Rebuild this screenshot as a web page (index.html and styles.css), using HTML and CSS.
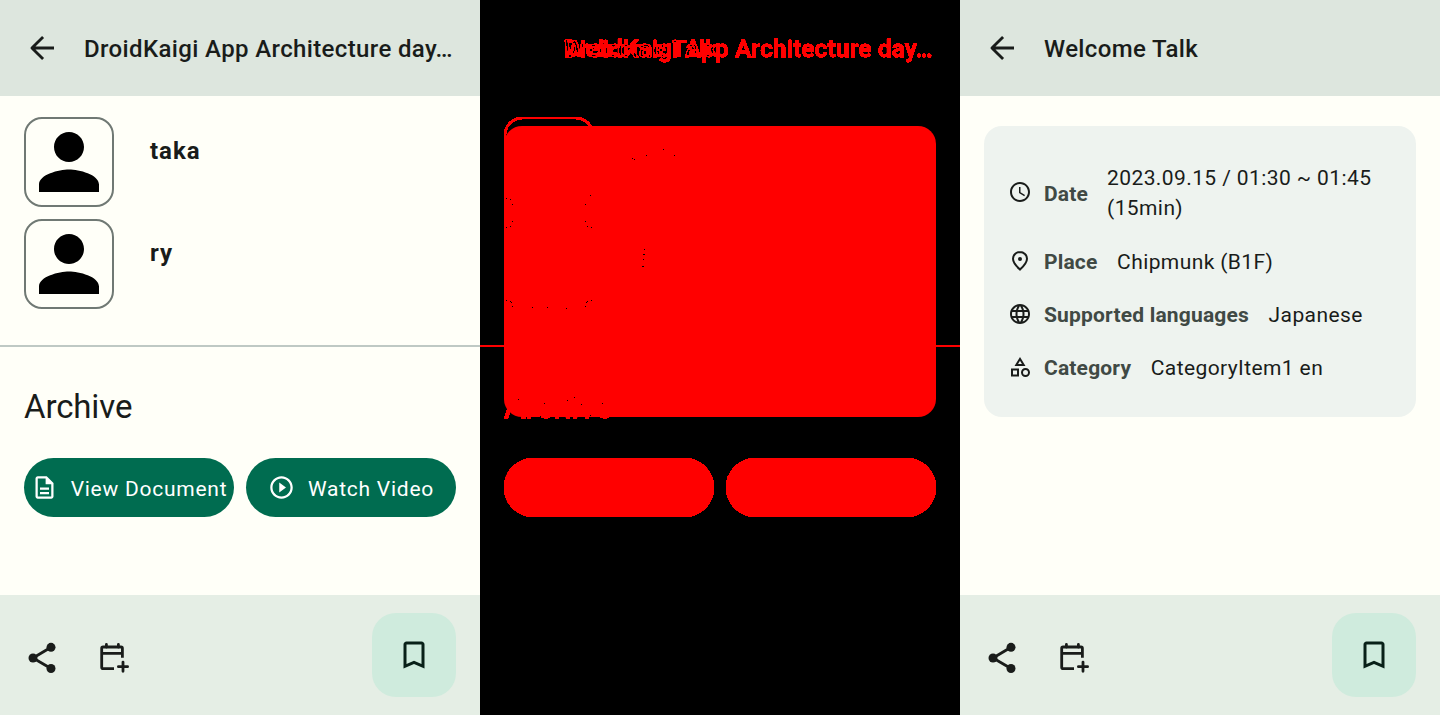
FILE: index.html
```html
<!DOCTYPE html>
<html lang="en">
<head>
<meta charset="utf-8">
<title>DroidKaigi session</title>
<link rel="stylesheet" href="styles.css">
</head>
<body>
<svg class="defs" aria-hidden="true">
  <defs>
    <filter id="threshold" x="0" y="0" width="1" height="1" color-interpolation-filters="sRGB">
      <feComponentTransfer><feFuncR type="linear" slope="60" intercept="-0.6"/></feComponentTransfer>
    </filter>
    <filter id="solid" x="-0.1" y="-0.1" width="1.2" height="1.2" color-interpolation-filters="sRGB">
      <feComponentTransfer><feFuncA type="linear" slope="60" intercept="-0.6"/></feComponentTransfer>
    </filter>
    <symbol id="back" viewBox="0 0 24 24"><path d="M20 12H5.2M12.7 4.7 5.3 12l7.4 7.3" fill="none" stroke="currentColor" stroke-width="1.9" stroke-linejoin="round"/></symbol>
    <symbol id="person" viewBox="0 0 24 24"><path d="M12 12c2.21 0 4-1.79 4-4s-1.79-4-4-4-4 1.79-4 4 1.79 4 4 4zm0 2c-2.67 0-8 1.34-8 4v2h16v-2c0-2.66-5.33-4-8-4z"/></symbol>
    <symbol id="share" viewBox="0 0 24 24"><path d="M18 4.9 6 12l12 7" fill="none" stroke="currentColor" stroke-width="1.9"/><circle cx="18" cy="4.9" r="3"/><circle cx="6" cy="12" r="3"/><circle cx="18" cy="19" r="3"/></symbol>
    <symbol id="calendar" viewBox="0 0 36 36"><g fill="none" stroke="currentColor" stroke-width="2.8" stroke-linejoin="round"><path d="M18 28.600H7.100q-1.400 0-1.400-1.400V8.400q0-1.400 1.400-1.400h17.900q1.400 0 1.400 1.400v9.300M5.700 13.300h20.700"/><path d="M10.400 7V4.400M22.400 7V4.400M27 22.100v9.200M22.400 26.700h9.200" stroke-linecap="round"/></g></symbol>
    <symbol id="bookmark" viewBox="0 0 24 24"><path d="M17 3H7c-1.100 0-1.990.9-1.990 2L5 21l7-3 7 3V5c0-1.100-.9-2-2-2zm0 15-5-2.180L7 18V5h10v13z"/></symbol>
    <symbol id="doc" viewBox="0 0 24 24"><path d="M8 16h8v2H8zm0-4h8v2H8zm6-10H6c-1.100 0-2 .9-2 2v16c0 1.100.89 2 1.990 2H18c1.100 0 2-.9 2-2V8l-6-6zm4 18H6V4h7v5h5v11z"/></symbol>
    <symbol id="play" viewBox="0 0 24 24"><path d="m10 16.500 6-4.500-6-4.500v9zM12 2C6.480 2 2 6.480 2 12s4.480 10 10 10 10-4.480 10-10S17.520 2 12 2zm0 18c-4.410 0-8-3.590-8-8s3.590-8 8-8 8 3.590 8 8-3.590 8-8 8z"/></symbol>
    <symbol id="clock" viewBox="0 0 24 24"><path d="M11.990 2C6.470 2 2 6.480 2 12s4.470 10 9.990 10C17.520 22 22 17.520 22 12S17.520 2 11.990 2zM12 20c-4.420 0-8-3.580-8-8s3.580-8 8-8 8 3.580 8 8-3.580 8-8 8zm.5-13H11v6l5.250 3.150.75-1.230-4.500-2.670z"/></symbol>
    <symbol id="pin" viewBox="0 0 24 24"><path d="M12 3C8.200 3 5 5.900 5 9.700c0 3 2.400 6.600 7 10.900 4.600-4.300 7-7.900 7-10.900C19 5.900 15.800 3 12 3z" fill="none" stroke="currentColor" stroke-width="2"/><circle cx="12" cy="10" r="2"/></symbol>
    <symbol id="globe" viewBox="0 0 24 24"><path d="M11.990 2C6.470 2 2 6.480 2 12s4.470 10 9.990 10C17.520 22 22 17.520 22 12S17.520 2 11.990 2zm6.930 6h-2.950c-.32-1.250-.78-2.450-1.380-3.560 1.840.630 3.370 1.910 4.330 3.560zM12 4.040c.83 1.200 1.480 2.530 1.910 3.960h-3.820c.43-1.430 1.080-2.760 1.910-3.960zM4.260 14C4.100 13.360 4 12.690 4 12s.1-1.360.26-2h3.380c-.08.66-.14 1.320-.14 2s.06 1.340.14 2H4.260zm.82 2h2.950c.32 1.250.78 2.450 1.380 3.560-1.840-.63-3.370-1.900-4.330-3.560zm2.950-8H5.080c.96-1.660 2.490-2.930 4.330-3.560C8.810 5.550 8.350 6.750 8.030 8zM12 19.960c-.83-1.200-1.480-2.530-1.910-3.960h3.820c-.43 1.430-1.080 2.760-1.910 3.960zM14.340 14H9.660c-.09-.66-.16-1.320-.16-2s.07-1.350.16-2h4.680c.09.65.16 1.320.16 2s-.07 1.340-.16 2zm.25 5.560c.6-1.110 1.060-2.310 1.380-3.560h2.950c-.96 1.650-2.490 2.930-4.330 3.560zM16.360 14c.08-.66.14-1.320.14-2s-.06-1.340-.14-2h3.380c.16.64.26 1.310.26 2s-.1 1.360-.26 2h-3.380z"/></symbol>
    <symbol id="category" viewBox="0 0 24 24"><path d="m12 2-5.500 9h11L12 2zm0 3.840L13.930 9h-3.870L12 5.840zM17.500 13c-2.490 0-4.500 2.010-4.500 4.500s2.010 4.500 4.500 4.500 4.500-2.010 4.500-4.500-2.010-4.500-4.500-4.500zm0 7a2.500 2.500 0 0 1 0-5 2.500 2.500 0 0 1 0 5zM3 21.500h8v-8H3v8zm2-6h4v4H5v-4z"/></symbol>
  </defs>
</svg>
<main class="board">
  <section class="screen">
    <header class="topbar"><svg class="icon-lg"><use href="#back"/></svg><h1 class="title">DroidKaigi App Architecture day…</h1></header>
    <div class="content">
      <div class="speakers">
        <div class="speaker"><div class="avatar"><svg class="portrait"><use href="#person"/></svg></div><span class="name">taka</span></div>
        <div class="speaker"><div class="avatar"><svg class="portrait"><use href="#person"/></svg></div><span class="name">ry</span></div>
      </div>
      <div class="archive">
        <h2 class="heading">Archive</h2>
        <div class="actions">
          <button class="button"><svg class="icon-md"><use href="#doc"/></svg><span class="button-label">View Document</span></button>
          <button class="button"><svg class="icon-md"><use href="#play"/></svg><span class="button-label">Watch Video</span></button>
        </div>
      </div>
    </div>
    <footer class="bottombar"><svg class="icon-lg"><use href="#share"/></svg><svg class="icon-lg"><use href="#calendar"/></svg><button class="fab"><svg class="icon-lg"><use href="#bookmark"/></svg></button></footer>
  </section>

  <section class="screen diff">
    <header class="diff-titles">
      <span class="title diff-title">DroidKaigi App Architecture day…</span>
      <span class="title diff-title diff-over">Welcome Talk</span>
    </header>
    <div class="diff-body">
      <div class="diff-avatar"></div>
      <div class="diff-divider"></div>
      <div class="diff-heading heading">Archive</div>
      <div class="diff-card"></div>
      <svg class="specks" viewBox="480 96 480 499"><path d="M663 149h1v1h-1zM632 158h1v1h-1zM634 159h1v1h-1zM646 155h1v1h-1zM674 155h1v1h-1zM590 195h1v1h-1zM506 198h1v1h-1zM510 199h1v1h-1zM512 204h1v1h-1zM585 204h1v1h-1zM512 221h1v1h-1zM510 226h1v1h-1zM506 227h1v1h-1zM585 221h1v1h-1zM587 226h1v1h-1zM591 227h1v1h-1zM644 249h1v1h-1zM643 254h2v1h-2zM643 259h1v1h-1zM642 266h2v1h-2zM506 300h1v1h-1zM510 301h1v1h-1zM511 302h1v1h-1zM512 306h1v1h-1zM532 307h1v1h-1zM547 307h1v1h-1zM566 308h1v1h-1zM591 300h1v1h-1zM587 301h1v1h-1zM586 302h1v1h-1zM585 306h1v1h-1zM518 399h1v1h-1zM574 397h1v1h-1zM567 400h1v1h-1zM544 403h1v1h-1zM581 404h1v1h-1zM602 403h1v1h-1zM540 416h1v1h-1zM590 415h1v1h-1z"/></svg>
      <div class="diff-actions"><div class="diff-button"></div><div class="diff-button"></div></div>
    </div>
  </section>

  <section class="screen">
    <header class="topbar"><svg class="icon-lg"><use href="#back"/></svg><h1 class="title">Welcome Talk</h1></header>
    <div class="content">
      <div class="card">
        <div class="row"><svg class="icon-sm"><use href="#clock"/></svg><span class="label">Date</span><span class="value">2023.09.15 / 01:30 ~ 01:45<br>(15min)</span></div>
        <div class="row"><svg class="icon-sm"><use href="#pin"/></svg><span class="label">Place</span><span class="value">Chipmunk (B1F)</span></div>
        <div class="row"><svg class="icon-sm"><use href="#globe"/></svg><span class="label">Supported languages</span><span class="value">Japanese</span></div>
        <div class="row"><svg class="icon-sm"><use href="#category"/></svg><span class="label">Category</span><span class="value">CategoryItem1 en</span></div>
      </div>
    </div>
    <footer class="bottombar"><svg class="icon-lg"><use href="#share"/></svg><svg class="icon-lg"><use href="#calendar"/></svg><button class="fab"><svg class="icon-lg"><use href="#bookmark"/></svg></button></footer>
  </section>
</main>
</body>
</html>
```
FILE: styles.css
```css
* { box-sizing: border-box; }
body { margin: 0; font-family: Roboto, sans-serif; color: #191c1a; overflow: hidden; }
svg { fill: currentColor; display: block; flex: none; }
button { border: 0; font: inherit; padding: 0; margin: 0; }
.defs { position: absolute; width: 0; height: 0; }
.board { display: grid; grid-template-columns: repeat(3, 480px); height: 715px; }
.screen { display: flex; flex-direction: column; height: 715px; background: #fffff8; }
.icon-lg { width: 36px; height: 36px; }
.icon-md { width: 27px; height: 27px; }
.icon-sm { width: 24px; height: 24px; margin-right: 12px; margin-top: -2px; }

.topbar { display: flex; align-items: center; gap: 24px; height: 96px; padding: 0 24px; background: #dde6de; }
.title { margin: 0; padding-top: 2px; font-size: 24px; font-weight: 500; line-height: 36px; letter-spacing: .37px; white-space: nowrap; }
.content { flex: 1; }

.speakers { display: flex; flex-direction: column; gap: 12px; height: 251px; padding: 21px 24px 0; border-bottom: 2px solid #bfc9c4; }
.speaker { display: flex; gap: 36px; }
.avatar { width: 90px; height: 90px; border: 2px solid #707974; border-radius: 18px; color: #000; }
.portrait { width: 90px; height: 90px; margin: -2px; }
.name { padding-top: 16px; font-size: 24px; font-weight: 700; line-height: 36px; letter-spacing: 1px; }
.archive { padding: 39px 24px 0; }
.heading { margin: 0; font-size: 33px; font-weight: 400; line-height: 42px; letter-spacing: -.12px; }
.actions { display: flex; gap: 12px; margin-top: 30px; }
.button { display: flex; align-items: center; justify-content: center; gap: 13px; width: 210px; height: 59px; border-radius: 30px; background: #006c50; color: #fff; }
.button-label { padding-top: 2px; font-size: 21px; line-height: 30px; letter-spacing: .75px; white-space: nowrap; }

.bottombar { display: flex; align-items: center; gap: 36px; height: 120px; padding: 0 24px; background: #e5eee5; }
.bottombar > .icon-lg { margin-top: 6px; }
.fab { display: flex; align-items: center; justify-content: center; width: 84px; height: 84px; margin-left: auto; border-radius: 24px; background: #cfebdd; color: #082018; }

.card { display: flex; flex-direction: column; gap: 23px; height: 291px; margin: 30px 24px 0; padding: 37px 24px 0; border-radius: 18px; background: #eef3ef; }
.row { display: flex; align-items: center; font-size: 21px; line-height: 30px; }
.row:first-child { margin-bottom: 1px; }
.label { margin-right: 19.6px; font-weight: 700; color: #404944; letter-spacing: .18px; }
.row:first-child .label { margin-right: 19px; padding-top: 2px; }
.value { letter-spacing: .4px; white-space: nowrap; }

.diff { background: #000; color: #f00; }
.diff-titles { display: grid; align-items: center; height: 96px; padding-left: 84px; background: #000; filter: url(#threshold); isolation: isolate; }
.diff-title { grid-area: 1 / 1; -webkit-text-stroke: .4px #f00; }
.diff-over { mix-blend-mode: difference; -webkit-text-stroke-width: 0; }
.diff-body { display: grid; grid-template-rows: 362px 59px; }
.diff-avatar, .diff-card, .diff-heading, .diff-divider, .specks { grid-area: 1 / 1; }
.diff-avatar { width: 90px; height: 90px; margin: 21px 24px 0; border: 2px solid #f00; border-radius: 18px; filter: url(#solid); }
.diff-divider { height: 2px; margin-top: 249px; background: #f00; }
.diff-heading { margin: 290px 24px 0; height: 42px; -webkit-text-stroke: .5px #f00; filter: url(#solid); }
.diff-card { z-index: 1; height: 291px; margin: 30px 24px 0; border-radius: 18px; background: #f00; }
.specks { z-index: 2; width: 480px; height: 499px; color: #000; }
.diff-actions { grid-area: 2 / 1; z-index: 3; display: flex; gap: 12px; padding: 0 24px; }
.diff-button { width: 210px; height: 59px; border-radius: 30px; background: #f00; filter: url(#solid); }
```
